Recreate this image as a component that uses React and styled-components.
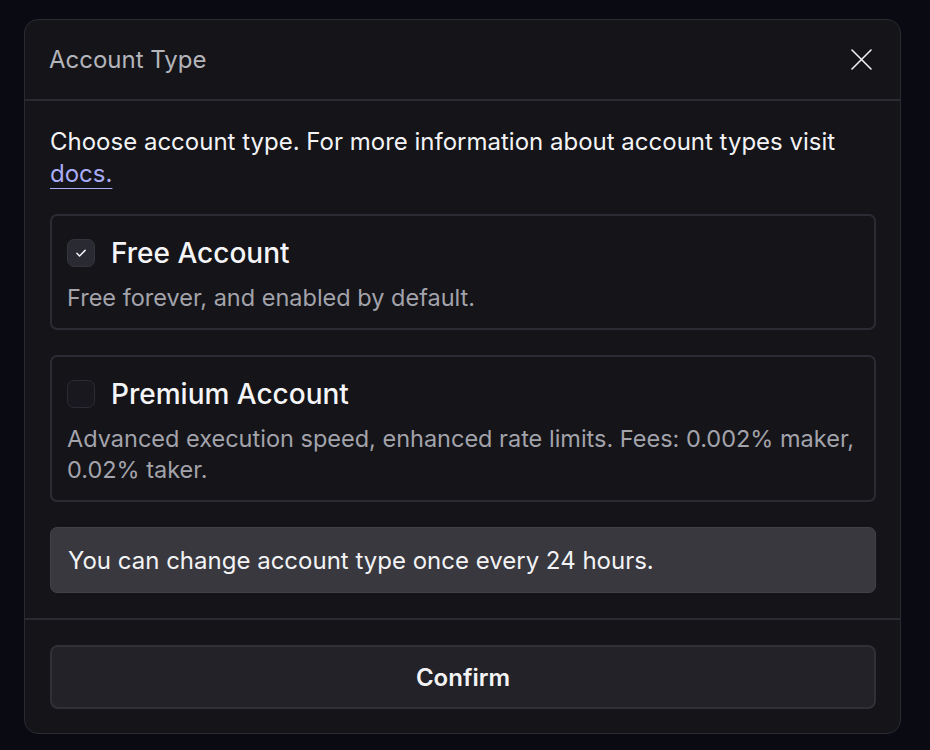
import React, { useState } from "react";
import styled, { createGlobalStyle } from "styled-components";

const GlobalStyle = createGlobalStyle`
  * { box-sizing: border-box; }
  body {
    margin: 0;
    background: #0a0a13;
    font-family: Inter, "Noto Sans", sans-serif;
    -webkit-font-smoothing: antialiased;
  }
`;

const accounts = [
  {
    id: "free",
    title: "Free Account",
    desc: "Free forever, and enabled by default.",
  },
  {
    id: "premium",
    title: "Premium Account",
    desc: "Advanced execution speed, enhanced rate limits. Fees: 0.002% maker, 0.02% taker.",
  },
];

const App = () => {
  const [selected, setSelected] = useState("free");

  return (
    <>
      <GlobalStyle />
      <Page>
        <Modal>
          <Header>
            <Title>Account Type</Title>
            <CloseButton aria-label="Close">
              <svg width="21" height="21" viewBox="0 0 21 21" fill="none" stroke="currentColor" strokeWidth="1.6" strokeLinecap="round">
                <path d="M1 1L20 20M20 1L1 20" />
              </svg>
            </CloseButton>
          </Header>

          <Body>
            <Intro>
              Choose account type. For more information about account types visit{" "}
              <DocsLink href="#">docs.</DocsLink>
            </Intro>

            {accounts.map((a) => (
              <OptionCard key={a.id} onClick={() => setSelected(a.id)}>
                <OptionHead>
                  <Check $checked={selected === a.id}>
                    {selected === a.id && (
                      <svg width="14" height="14" viewBox="0 0 24 24" fill="none" stroke="#f2f2f5" strokeWidth="2.6" strokeLinecap="round" strokeLinejoin="round">
                        <path d="M5 12.5l4.5 4.5L19 7.5" />
                      </svg>
                    )}
                  </Check>
                  <OptionTitle>{a.title}</OptionTitle>
                </OptionHead>
                <OptionDesc>{a.desc}</OptionDesc>
              </OptionCard>
            ))}

            <Notice>You can change account type once every 24 hours.</Notice>
          </Body>

          <Footer>
            <ConfirmButton>Confirm</ConfirmButton>
          </Footer>
        </Modal>
      </Page>
    </>
  );
};

// Wrappers

const Page = styled.div`
  padding: 19px 29px 18px 24px;
`;

const Modal = styled.div`
  width: 877px;
  background: #141419;
  border: 1px solid #2a2a32;
  border-radius: 14px;
  display: flex;
  flex-direction: column;
`;

const Header = styled.div`
  height: 81px;
  padding: 0 28px 0 24px;
  display: flex;
  align-items: center;
  justify-content: space-between;
  border-bottom: 2px solid #2a2a31;
`;

const Title = styled.h2`
  margin: 0;
  font-size: 24px;
  font-weight: 400;
  color: #b4b4bb;
`;

const CloseButton = styled.button`
  background: transparent;
  border: none;
  padding: 0;
  color: #f0f0f3;
  display: flex;
  cursor: pointer;
`;

const Body = styled.div`
  padding: 25px 24px 25px 25px;
  display: flex;
  flex-direction: column;
  gap: 25px;
  border-bottom: 2px solid #2a2a31;
`;

const Intro = styled.p`
  margin: 0 0 -1px;
  font-size: 24px;
  line-height: 32px;
  color: #f3f3f5;
`;

const DocsLink = styled.a`
  color: #a9acf5;
  text-decoration: underline;
  text-underline-offset: 6px;
  text-decoration-thickness: 1px;
`;

// contents

const OptionCard = styled.div`
  border: 2px solid #2b2b33;
  border-radius: 7px;
  padding: 22px 8px 15px 15px;
  display: flex;
  flex-direction: column;
  gap: 14px;
  cursor: pointer;
`;

const OptionHead = styled.div`
  display: flex;
  align-items: center;
  gap: 16px;
  height: 30px;
`;

const Check = styled.span`
  width: 28px;
  height: 28px;
  border-radius: 7px;
  border: 1px solid ${(p) => (p.$checked ? "#34343c" : "#2c2c34")};
  background: ${(p) => (p.$checked ? "#2a2a32" : "#18181e")};
  display: flex;
  align-items: center;
  justify-content: center;
`;

const OptionTitle = styled.span`
  font-size: 28px;
  font-weight: 500;
  color: #f5f5f7;
`;

const OptionDesc = styled.p`
  margin: 0;
  font-size: 23.5px;
  line-height: 31px;
  color: #a3a3ab;
`;

const Notice = styled.div`
  background: #38383e;
  border: 1px solid #404047;
  border-radius: 7px;
  height: 66px;
  padding: 0 17px;
  display: flex;
  align-items: center;
  font-size: 24px;
  color: #f3f3f5;
`;

const Footer = styled.div`
  padding: 25px 24px 24px 25px;
`;

const ConfirmButton = styled.button`
  width: 100%;
  height: 64px;
  background: #222228;
  border: 2px solid #303037;
  border-radius: 8px;
  font-family: Inter, "Noto Sans", sans-serif;
  font-size: 24px;
  font-weight: 600;
  color: #f3f3f5;
  cursor: pointer;
`;

export default App;
